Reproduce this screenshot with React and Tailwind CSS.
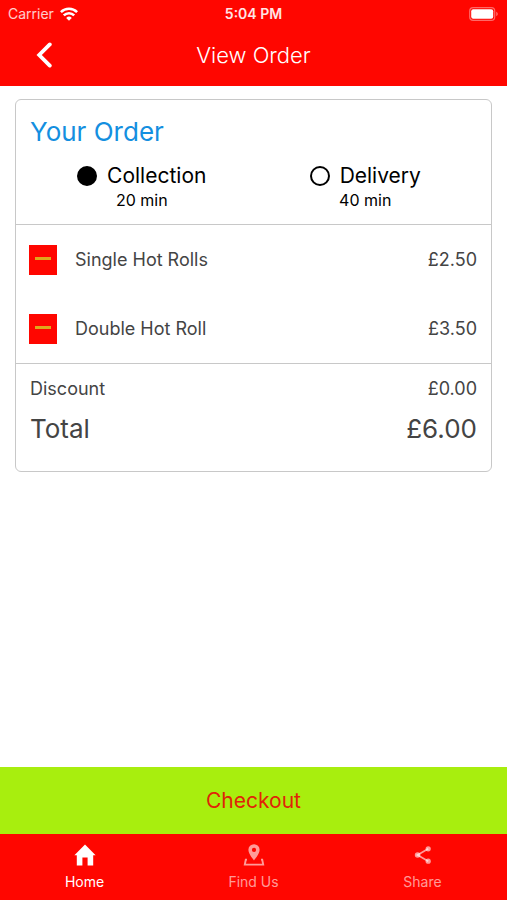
import { useState } from 'react';

const items = [
  { id: 1, name: 'Single Hot Rolls', price: 2.5 },
  { id: 2, name: 'Double Hot Roll', price: 3.5 },
];

const methods = [
  { id: 'collection', label: 'Collection', time: '20 min' },
  { id: 'delivery', label: 'Delivery', time: '40 min' },
];

const formatPrice = (value) => `£${value.toFixed(2)}`;

function WifiIcon() {
  return (
    <svg viewBox="0 0 18 14" className="w-[18px] h-[14px]" fill="none" stroke="currentColor" strokeWidth="2.6" aria-hidden="true">
      <path d="M0.9 5.1a11.6 11.6 0 0 1 16.2 0" />
      <path d="M3.8 8.4a7.4 7.4 0 0 1 10.4 0" />
      <path d="M9 13.8 6.2 10.9a4 4 0 0 1 5.6 0z" fill="currentColor" stroke="none" />
    </svg>
  );
}

function BatteryIcon() {
  return (
    <svg viewBox="0 0 30 14" className="w-[30px] h-[14px]" aria-hidden="true">
      <rect x="0.7" y="0.7" width="25" height="12.6" rx="3.4" fill="none" stroke="#fff" strokeOpacity="0.4" strokeWidth="1.2" />
      <rect x="2.2" y="2.2" width="22" height="9.6" rx="2" fill="#fff" />
      <path d="M27.2 4.8v4.4c1-.4 1.6-1.2 1.6-2.2s-.6-1.8-1.6-2.2z" fill="#fff" fillOpacity="0.4" />
    </svg>
  );
}

function HomeIcon() {
  return (
    <svg viewBox="0 0 22 22" className="w-[22px] h-[22px]" fill="currentColor" aria-hidden="true">
      <path d="M11 0.6 0.4 11.2h2.4v10.2h5.6v-7.8h5.2v7.8h5.6V11.2h2.4z" />
    </svg>
  );
}

function FindIcon() {
  return (
    <svg viewBox="0 0 22 22" className="w-[22px] h-[22px]" aria-hidden="true">
      <path
        d="M11 0.2a5.6 5.6 0 0 0-5.600 5.600c0 4.200 5.600 10.600 5.600 10.600s5.600-6.400 5.600-10.600A5.600 5.600 0 0 0 11 0.200zm0 3.600a2.100 2.100 0 1 1 0 4.200 2.100 2.100 0 0 1 0-4.200z"
        fill="currentColor"
        fillRule="evenodd"
      />
      <path d="M4 15.600H2.800L1.800 20.600h18.400l-1-5H18" fill="none" stroke="currentColor" strokeWidth="1.9" />
    </svg>
  );
}

function ShareIcon() {
  return (
    <svg viewBox="0 0 22 22" className="w-[22px] h-[22px]" fill="currentColor" aria-hidden="true">
      <path d="M16.2 4.8 5.6 11l10.6 6.2" fill="none" stroke="currentColor" strokeWidth="1.7" />
      <circle cx="16.2" cy="4.8" r="2.6" />
      <circle cx="5.6" cy="11" r="2.8" />
      <circle cx="16.2" cy="17.2" r="2.6" />
    </svg>
  );
}

const tabs = [
  { id: 'home', label: 'Home', Icon: HomeIcon },
  { id: 'find', label: 'Find Us', Icon: FindIcon },
  { id: 'share', label: 'Share', Icon: ShareIcon },
];

export default function App() {
  const [method, setMethod] = useState('collection');
  const [order, setOrder] = useState(items);

  const total = order.reduce((sum, item) => sum + item.price, 0);

  const removeItem = (id) => {
    setOrder(order.filter((item) => item.id !== id));
  };

  return (
    <div className="min-h-screen flex flex-col bg-white font-['Inter',sans-serif]">
      <header className="bg-[#ff0600] text-white">
        <div className="grid grid-cols-3 items-center h-7 px-2 text-sm">
          <div className="flex items-center gap-1.5 text-white/80">
            <span>Carrier</span>
            <span className="text-white"><WifiIcon /></span>
          </div>
          <span className="text-center font-semibold text-white/90">5:04 PM</span>
          <div className="flex justify-end">
            <BatteryIcon />
          </div>
        </div>
        <div className="grid grid-cols-[64px_1fr_64px] items-center h-[58px] pb-1">
          <button type="button" aria-label="Back" className="h-full flex items-center justify-end pr-3">
            <svg viewBox="0 0 16 26" className="w-4 h-[26px]" fill="none" stroke="currentColor" strokeWidth="3.8" strokeLinecap="round" aria-hidden="true">
              <path d="M13.8 2.4 3.2 13l10.600 10.600" />
            </svg>
          </button>
          <h1 className="text-center text-[22px] font-light">View Order</h1>
        </div>
      </header>

      <main className="flex-1 px-[15px] pt-[13px] pb-4">
        <section className="border border-[#c8c8c8] rounded-md text-[#444]">
          <div className="px-3.5 pt-3.5 pb-3.5 border-b border-[#c8c8c8]">
            <h2 className="text-[26px] leading-9 text-[#148fe0]">Your Order</h2>
            <div className="grid grid-cols-2 mt-3 text-black">
              {methods.map((m) => (
                <label key={m.id} className="flex flex-col items-center">
                  <span className="flex items-center gap-2.5 text-[21px] leading-7">
                    <input
                      type="radio"
                      name="method"
                      checked={method === m.id}
                      onChange={() => setMethod(m.id)}
                      className="appearance-none w-5 h-5 rounded-full border-2 border-black checked:bg-black"
                    />
                    {m.label}
                  </span>
                  <span className="text-base leading-5">{m.time}</span>
                </label>
              ))}
            </div>
          </div>

          <ul className="pl-[13px] pr-3.5 border-b border-[#c8c8c8] text-lg">
            {order.map((item) => (
              <li key={item.id} className="flex items-center h-[69px]">
                <button
                  type="button"
                  aria-label={`Remove ${item.name}`}
                  onClick={() => removeItem(item.id)}
                  className="flex items-center justify-center w-7 h-[30px] mr-[18px] pb-0.5 bg-[#ff0600]"
                >
                  <span className="w-4 h-[3px] bg-[#e0a81c]" />
                </button>
                <span className="flex-1">{item.name}</span>
                <span>{formatPrice(item.price)}</span>
              </li>
            ))}
          </ul>

          <dl className="px-3.5 pt-[11px] pb-6">
            <div className="flex justify-between text-lg">
              <dt>Discount</dt>
              <dd>{formatPrice(0)}</dd>
            </div>
            <div className="flex justify-between mt-2 text-[26px] leading-9">
              <dt>Total</dt>
              <dd>{formatPrice(total)}</dd>
            </div>
          </dl>
        </section>
      </main>

      <button type="button" className="h-[67px] bg-[#a8ee0e] text-[21px] text-[#e02408]">
        Checkout
      </button>

      <nav className="grid grid-cols-3 h-[66px] bg-[#ff0600]">
        {tabs.map(({ id, label, Icon }) => (
          <a
            key={id}
            href={`#${id}`}
            className={`flex flex-col items-center pt-2.5 gap-1.5 text-sm ${id === 'home' ? 'text-white' : 'text-white/60'}`}
          >
            <Icon />
            <span>{label}</span>
          </a>
        ))}
      </nav>
    </div>
  );
}
